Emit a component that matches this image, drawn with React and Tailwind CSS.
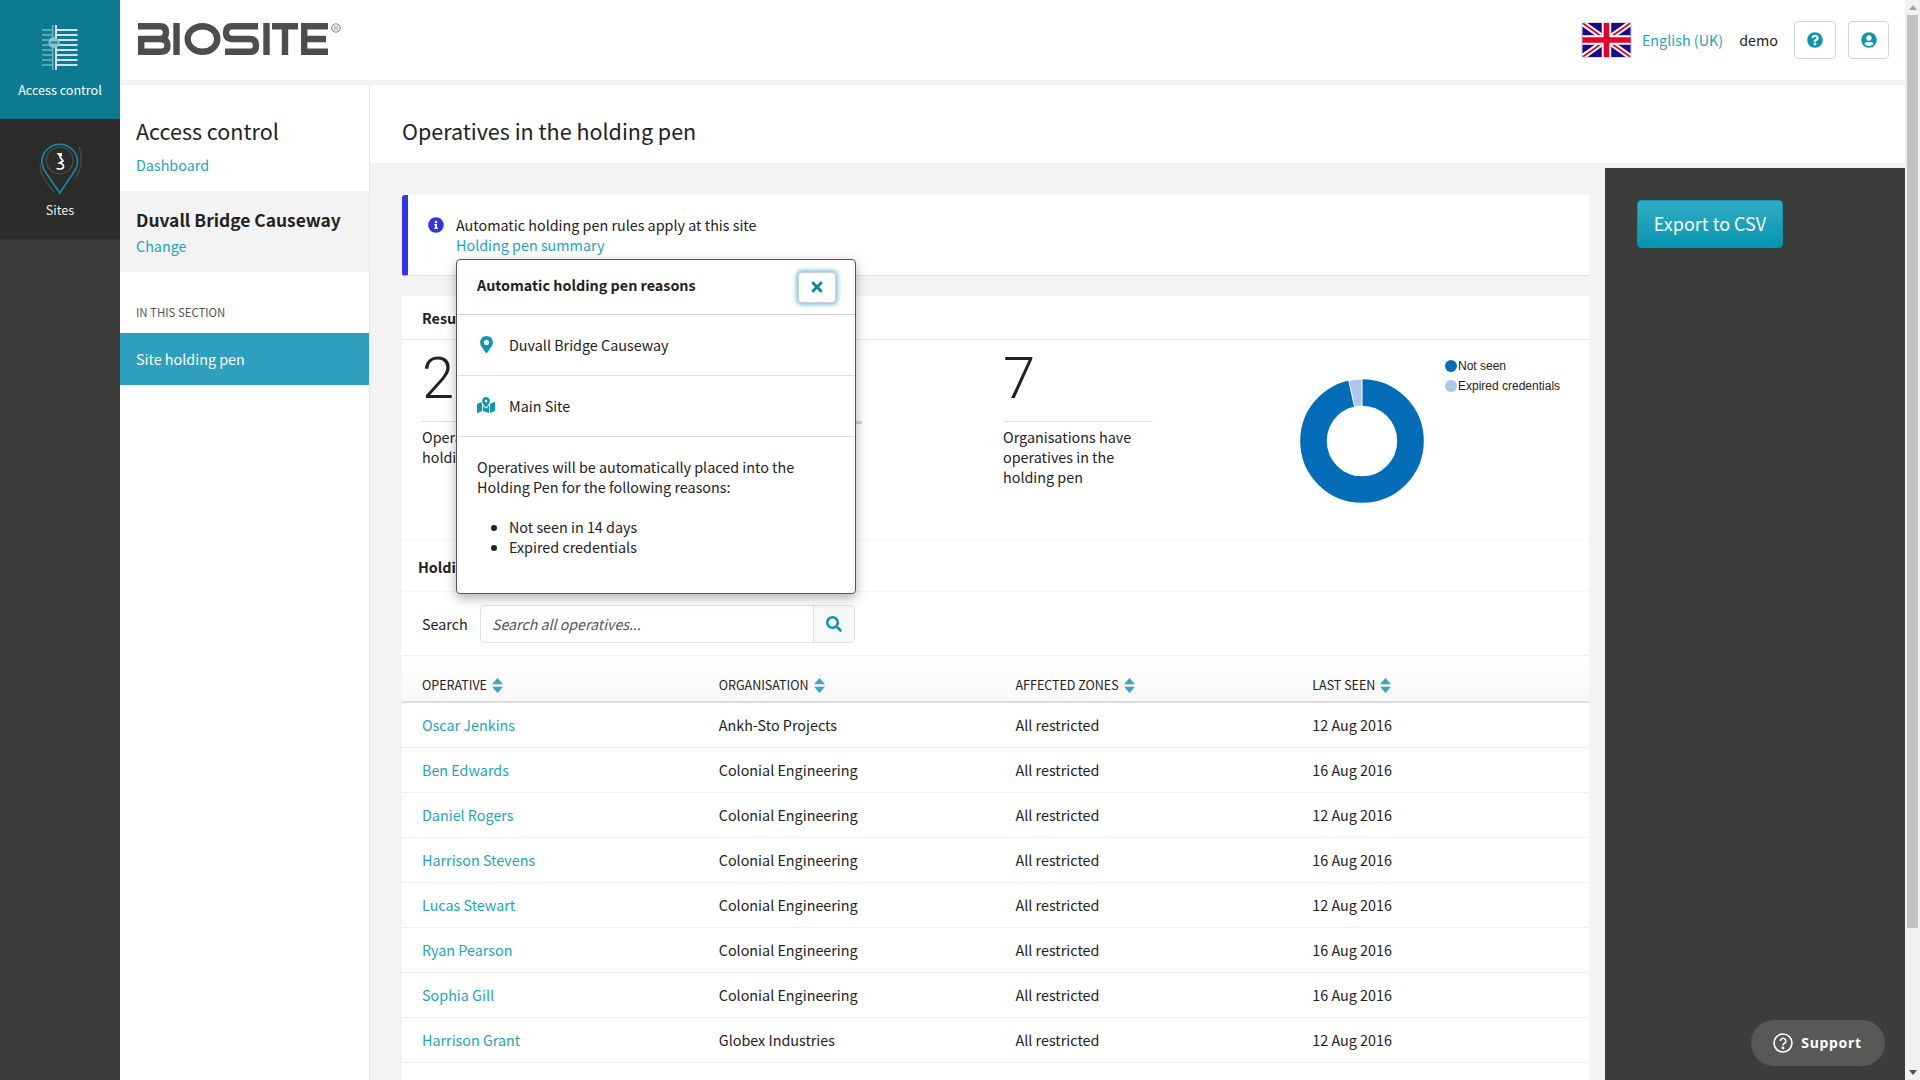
import React from "react";
import { FaMapMarkerAlt, FaMapMarkedAlt, FaQuestionCircle, FaUserCircle, FaInfoCircle, FaTimes, FaSearch } from "react-icons/fa";

const rows = [
  ["Oscar Jenkins", "Ankh-Sto Projects", "12 Aug 2016"],
  ["Ben Edwards", "Colonial Engineering", "16 Aug 2016"],
  ["Daniel Rogers", "Colonial Engineering", "12 Aug 2016"],
  ["Harrison Stevens", "Colonial Engineering", "16 Aug 2016"],
  ["Lucas Stewart", "Colonial Engineering", "12 Aug 2016"],
  ["Ryan Pearson", "Colonial Engineering", "16 Aug 2016"],
  ["Sophia Gill", "Colonial Engineering", "16 Aug 2016"],
  ["Harrison Grant", "Globex Industries", "12 Aug 2016"],
];

function Logo() {
  return (
    <svg width="208" height="40" viewBox="136 20 208 40" fill="none" stroke="#4d4d4f" strokeWidth="6.4">
      <path d="M138 26.2H160Q166 26.2 166 32Q166 39 160 39H141.2V51.8H160Q167.5 51.8 167.5 45.4Q167.5 39 160 39" />
      <path d="M176.5 23V55" />
      <ellipse cx="202.5" cy="39" rx="14.8" ry="12.8" />
      <path d="M258 26.2H232Q226 26.2 226 32.6Q226 39 232 39H250Q256 39 256 45.4Q256 51.8 250 51.8H225" />
      <path d="M266.5 23V55" />
      <path d="M272 26.2H298M285 26.2V55" />
      <path d="M328 26.2H304.2V51.8H328M304.2 39H326" />
      <circle cx="336" cy="28" r="4.2" strokeWidth="1" stroke="#777" />
      <text x="336" y="30.5" textAnchor="middle" fontSize="6.5" fill="#777" stroke="none" fontFamily="Liberation Sans">R</text>
    </svg>
  );
}

function AccessIcon() {
  const ys = [31, 36, 41, 46, 51, 56, 61, 66];
  return (
    <svg width="40" height="48" viewBox="40 26 40 48">
      {ys.map((y) => (
        <path key={y} d={`M42 ${y}H52`} stroke="#6fb2c1" strokeWidth="1.6" />
      ))}
      {ys.map((y) => (
        <path key={"r" + y} d={`M56 ${y}H77.5`} stroke="#ffffff" strokeWidth="1.6" />
      ))}
      <path d="M52.7 26V71" stroke="#6fb2c1" strokeWidth="1.6" />
      <path d="M56 26V71" stroke="#ffffff" strokeWidth="1.6" />
      <circle cx="54" cy="43.5" r="5.6" fill="#8cc3cf" />
      <path d="M50.5 43.5H57.5" stroke="#0c7b92" strokeWidth="1.8" />
    </svg>
  );
}

function SiteIcon() {
  return (
    <svg width="50" height="62" viewBox="36 138 50 62" fill="none">
      <path d="M41 165Q41 178 55 193" stroke="#4a4a49" strokeWidth="1.2" />
      <path d="M80 148Q86 165 76 180" stroke="#4a4a49" strokeWidth="1.2" />
      <path d="M60.7 194L46.5 173Q42.5 167 42.8 161.5A18 18 0 0 1 78.6 161.5Q79 167 75 173Z" stroke="#0e8ca8" strokeWidth="1.6" />
      <circle cx="60.7" cy="161.5" r="13.3" stroke="#4b4b4a" strokeWidth="1.3" />
      <path d="M57.5 154H63V157.5H60.5Z" fill="#ffffff" />
      <path d="M60.5 157.5L64 162L60.5 164Q65 165 64.5 168Q63.5 171 57.5 169.5" stroke="#ffffff" strokeWidth="1.7" />
    </svg>
  );
}

function Flag() {
  return (
    <svg width="51" height="36" viewBox="0 0 51 36" className="rounded-[3px] border border-[#ddd] block">
      <rect width="51" height="36" fill="#1a0a86" />
      <path d="M0 0L51 36M51 0L0 36" stroke="#ffffff" strokeWidth="6" />
      <path d="M0 0L51 36M51 0L0 36" stroke="#e4002b" strokeWidth="2" />
      <path d="M25.5 0V36M0 18H51" stroke="#ffffff" strokeWidth="10" />
      <path d="M25.5 0V36M0 18H51" stroke="#e4002b" strokeWidth="6" />
    </svg>
  );
}

function Sort() {
  return (
    <svg width="11" height="15" viewBox="0 0 11 15" className="ml-[5px]">
      <path d="M5.5 0L11 6.3H0Z" fill="#37a7bf" />
      <path d="M5.5 15L0 8.7H11Z" fill="#37a7bf" />
    </svg>
  );
}

function Donut() {
  return (
    <svg width="128" height="128" viewBox="-64 -64 128 128">
      <circle r="48.5" fill="none" stroke="#036eb7" strokeWidth="26.6" />
      <path d="M0 -61.8A61.8 61.8 0 0 0 -13.2 -60.4L-7.5 -34.2A35 35 0 0 1 0 -35Z" fill="#aec6e8" stroke="#ffffff" strokeWidth="1" />
    </svg>
  );
}

export default function App() {
  return (
    <div className="flex h-screen w-full overflow-hidden bg-[#f3f3f3] text-[14.35px] leading-[20px] text-[#222] font-['Noto_Sans_CJK_SC','Noto_Sans',sans-serif]">
      {/* rail */}
      <div className="w-[120px] shrink-0 bg-[#3c3c3b] flex flex-col">
        <div className="h-[119px] bg-[#0c7b92] flex flex-col items-center pt-[25px] text-white text-[12.6px]">
          <AccessIcon />
          <div className="mt-[8px] leading-[18px]">Access control</div>
        </div>
        <div className="h-[121px] bg-[#2b2b2a] border-t border-[#262626] flex flex-col items-center pt-[17px] text-white text-[12.6px] border-b border-b-[#333]">
          <SiteIcon />
          <div className="mt-[2px] leading-[18px] text-[#eee]">Sites</div>
        </div>
      </div>

      {/* centre */}
      <div className="flex-1 min-w-0 flex flex-col">
        <header className="h-[80px] shrink-0 bg-white flex items-center">
          <div className="ml-[16px]"><Logo /></div>
          <div className="ml-auto flex items-center">
            <Flag />
            <a className="ml-[10px] text-[#1ea3c1]">English (UK)</a>
            <span className="ml-[16px]">demo</span>
            <button className="ml-[16px] w-[42px] h-[38px] border border-[#ccd5df] rounded-[4px] flex items-center justify-center text-[#0b96b2] text-[16px]"><FaQuestionCircle /></button>
            <button className="ml-[12px] w-[41px] h-[38px] border border-[#ccd5df] rounded-[4px] flex items-center justify-center text-[#0b96b2] text-[16px]"><FaUserCircle /></button>
            <div className="w-[16px]" />
          </div>
        </header>
        <div className="h-[5px] shrink-0" />
        <div className="flex-1 min-h-0 flex">
          {/* sidebar */}
          <aside className="w-[250px] shrink-0 bg-white border-r border-[#e6e6e6]">
            <div className="h-[106px] px-[16px] pt-[31px]">
              <div className="text-[21.5px] leading-[30px] text-[#222]">Access control</div>
              <a className="block mt-[9px] text-[#1ea3c1]">Dashboard</a>
            </div>
            <div className="h-[81px] bg-[#f3f3f3] px-[16px] pt-[16px]">
              <div className="text-[17.4px] leading-[26px] font-semibold text-[#222]">Duvall Bridge Causeway</div>
              <a className="block mt-[3px] text-[#1ea3c1]">Change</a>
            </div>
            <div className="h-[61px] px-[16px] pt-[31px] text-[11.4px] leading-[18px] text-[#555]">IN THIS SECTION</div>
            <div className="h-[52px] bg-[#2e9fbd] text-white px-[16px] flex items-center">Site holding pen</div>
          </aside>

          <main className="flex-1 min-w-0 flex flex-col">
            <div className="h-[78px] shrink-0 bg-white pl-[32px] pt-[14px] flex items-center text-[21.5px] leading-[30px]">Operatives in the holding pen</div>
            <div className="flex-1 min-h-0 flex">
              <div className="w-[1235px] shrink-0 pl-[32px] pr-[16px] pt-[32px] relative">
                {/* alert */}
                <div className="h-[81px] bg-white border-l-[6px] border-l-[#2f35ee] border-b border-b-[#ddd] rounded-l-[3px] flex pl-[20px] pt-[20px]">
                  <FaInfoCircle className="text-[#2f35ee] text-[16px] mt-[2px] shrink-0" />
                  <div className="ml-[12px]">
                    <div>Automatic holding pen rules apply at this site</div>
                    <a className="text-[#1ea3c1]">Holding pen summary</a>
                  </div>
                </div>

                {/* results */}
                <div className="mt-[20px] bg-white">
                  <div className="h-[44px] border-b border-[#e6e6e6] pl-[20px] flex items-center font-bold">Results</div>
                  <div className="h-[201px] border-b border-[#f5f5f5] pl-[20px] flex relative">
                    <div className="w-[150px] pt-[8px] shrink-0">
                      <div className="text-[58px] leading-[60px] font-light font-['Roboto',sans-serif] h-[73px]">28</div>
                      <div className="border-t border-[#c9e4f1] pt-[5px]">Operatives in the holding pen</div>
                    </div>
                    <div className="w-[270px] shrink-0 pt-[81px] ml-[20px]">
                      <div className="h-[3px] bg-[#b9dcec]" />
                    </div>
                    <div className="w-[150px] shrink-0 pt-[8px] ml-[141px]">
                      <div className="text-[58px] leading-[60px] font-light font-['Roboto',sans-serif] h-[73px]">7</div>
                      <div className="border-t border-[#c9e4f1] pt-[5px] pr-[10px]">Organisations have operatives in the holding pen</div>
                    </div>
                    <div className="ml-[145px] mt-[37px] shrink-0"><Donut /></div>
                    <div className="ml-[19px] mt-[16px] font-['Liberation_Sans',sans-serif] text-[12px] leading-[20px] text-[#222]">
                      <div className="flex items-center"><span className="w-[12px] h-[12px] rounded-full bg-[#036eb7] mr-[1px]" />Not seen</div>
                      <div className="flex items-center"><span className="w-[12px] h-[12px] rounded-full bg-[#aec6e8] mr-[1px]" />Expired credentials</div>
                    </div>
                  </div>
                  <div className="h-[51px] border-b border-[#f5f5f5] pl-[16px] pt-[2px] flex items-center font-bold">Holding pen</div>
                  <div className="h-[64px] border-b border-[#f0f0f0] pl-[20px] flex items-center">
                    <span className="w-[58px]">Search</span>
                    <div className="w-[375px] h-[38px] border border-[#dde1e6] rounded-[4px] flex">
                      <div className="flex-1 pl-[11px] flex items-center italic text-[#555] text-[14.2px]">Search all operatives...</div>
                      <div className="w-[41px] border-l border-[#dde1e6] bg-[#f8f8f8] rounded-r-[4px] flex items-center justify-center text-[#0b96b2] text-[16px]"><FaSearch /></div>
                    </div>
                  </div>
                  <div className="h-[47px] grid grid-cols-4 border-b-2 border-[#ddd] bg-gradient-to-b from-white to-[#f8f8f8] pt-[21px] text-[12.5px] leading-[16px]">
                    {["OPERATIVE", "ORGANISATION", "AFFECTED ZONES", "LAST SEEN"].map((h) => (
                      <div key={h} className="pl-[20px] flex items-center h-[16px]">{h}<Sort /></div>
                    ))}
                  </div>
                  {rows.map((r) => (
                    <div key={r[0]} className="h-[45px] grid grid-cols-4 border-b border-[#efefef] items-center">
                      <a className="pl-[20px] text-[#1ea3c1]">{r[0]}</a>
                      <div className="pl-[20px]">{r[1]}</div>
                      <div className="pl-[20px]">All restricted</div>
                      <div className="pl-[20px]">{r[2]}</div>
                    </div>
                  ))}
                  <div className="h-[40px]" />
                </div>

                {/* popover */}
                <div className="absolute left-[86px] top-[96px] w-[400px] h-[335px] bg-white border border-[#555] rounded-[4px] shadow-[0_4px_12px_rgba(0,0,0,0.3)] z-10">
                  <div className="h-[55px] border-b border-[#ccc] flex items-center pl-[20px] pr-[19px]">
                    <span className="font-bold pb-[4px]">Automatic holding pen reasons</span>
                    <button className="ml-auto w-[38px] h-[31px] bg-white border border-[#c9d3dc] rounded-[4px] shadow-[0_0_4px_2px_rgba(20,150,180,0.55)] flex items-center justify-center text-[#0b86a3] text-[16px]"><FaTimes /></button>
                  </div>
                  <div className="h-[61px] border-b border-[#ddd] flex items-center pl-[20px]">
                    <span className="w-[32px] flex justify-start pl-[1px] pb-[2px] text-[#0b96b2] text-[17px]"><FaMapMarkerAlt /></span>
                    <span>Duvall Bridge Causeway</span>
                  </div>
                  <div className="h-[61px] border-b border-[#ddd] flex items-center pl-[20px]">
                    <span className="w-[32px] pb-[3px] text-[#0b96b2] text-[18px] flex"><FaMapMarkedAlt /></span>
                    <span>Main Site</span>
                  </div>
                  <div className="pl-[20px] pr-[16px] pt-[20px]">
                    <p>Operatives will be automatically placed into the Holding Pen for the following reasons:</p>
                    <ul className="mt-[20px] list-disc pl-[32px]">
                      <li>Not seen in 14 days</li>
                      <li>Expired credentials</li>
                    </ul>
                  </div>
                </div>
              </div>

              {/* right panel */}
              <div className="flex-1 mt-[5px] bg-[#3c3c3b] pl-[32px] pt-[32px] relative">
                <button className="w-[146px] h-[48px] rounded-[4px] text-white text-[18px] pb-[2px] bg-gradient-to-b from-[#2eaec4] to-[#0094b0] border border-[#0f94ad]">Export to CSV</button>
                <div className="absolute right-[20px] bottom-[14px] w-[134px] h-[46px] rounded-full bg-[#585857] flex items-center justify-center gap-[8px] text-white text-[14px] font-bold tracking-[0.7px] font-['Noto_Sans',sans-serif] pr-[1px]">
                  <svg width="20" height="20" viewBox="0 0 20 20" fill="none" stroke="#fff" strokeWidth="1.6">
                    <circle cx="10" cy="10" r="9" />
                    <path d="M7.4 8A2.7 2.7 0 1 1 11.5 10.3Q10 11 10 12.4" />
                    <circle cx="10" cy="15" r="0.6" fill="#fff" />
                  </svg>
                  Support
                </div>
              </div>
            </div>
          </main>
        </div>
      </div>

      {/* scrollbar */}
      <div className="w-[15px] shrink-0 bg-[#f1f1f1] flex flex-col items-center">
        <div className="h-[15px] flex items-center justify-center">
          <svg width="8" height="5"><path d="M4 0L8 5H0Z" fill="#a3a3a3" /></svg>
        </div>
        <div className="w-[11px] h-[913px] bg-[#c1c1c1]" />
        <div className="mt-auto h-[15px] flex items-center justify-center">
          <svg width="8" height="5"><path d="M0 0H8L4 5Z" fill="#505050" /></svg>
        </div>
      </div>
    </div>
  );
}
